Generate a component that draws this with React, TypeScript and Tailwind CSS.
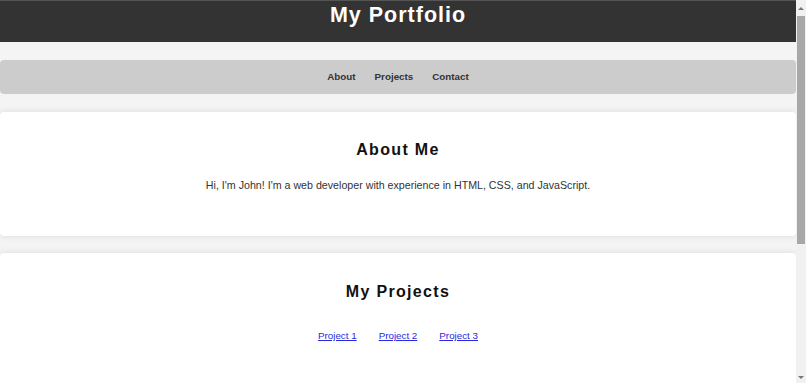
import React from 'react';

const navItems = ['About', 'Projects', 'Contact'];
const projects = ['Project 1', 'Project 2', 'Project 3'];

const Scrollbar: React.FC = () => (
  <div className="w-[10px] shrink-0 bg-[#f1f1f1] flex flex-col items-center">
    <div className="h-[16px] flex items-center justify-center">
      <div className="w-0 h-0 border-l-[3px] border-r-[3px] border-b-[3px] border-l-transparent border-r-transparent border-b-[#777]" />
    </div>
    <div className="w-[8px] h-[228px] bg-[#a8a8a8]" />
    <div className="flex-1" />
    <div className="h-[12px] flex items-center justify-center">
      <div className="w-0 h-0 border-l-[3px] border-r-[3px] border-t-[3px] border-l-transparent border-r-transparent border-t-[#777]" />
    </div>
  </div>
);

export default function App() {
  return (
    <div className="flex h-screen overflow-hidden bg-[#f4f4f4] font-['Liberation_Sans',Arial,sans-serif]">
      <div className="flex-1 min-w-0">
        {/* Header */}
        <header className="h-[42px] bg-[#333] border-t border-[#555] text-center text-white">
          <h1 className="pt-[2px] text-[21.5px] leading-[24px] font-bold tracking-[1px]">My Portfolio</h1>
        </header>

        {/* Nav */}
        <nav className="mt-[18px] h-[34px] bg-[#ccc] rounded-[4px] flex items-center justify-center gap-[19px]">
          {navItems.map((item) => (
            <a key={item} className="text-[9.8px] font-bold text-[#333]">
              {item}
            </a>
          ))}
        </nav>

        {/* About */}
        <section className="mt-[18px] h-[124px] bg-white rounded-[4px] shadow-[0_0_7px_rgba(0,0,0,0.1)] flex flex-col items-center pt-[29px]">
          <h2 className="text-[16px] leading-[18px] font-bold tracking-[1.33px] text-[#111]">About Me</h2>
          <p className="mt-[20px] text-[10.67px] leading-[12px] text-[#333]">
            Hi, I'm John! I'm a web developer with experience in HTML, CSS, and JavaScript.
          </p>
        </section>

        {/* Projects */}
        <section className="mt-[17px] h-[160px] bg-white rounded-[4px] shadow-[0_0_7px_rgba(0,0,0,0.1)] flex flex-col items-center pt-[30px]">
          <h2 className="text-[16px] leading-[18px] font-bold tracking-[1.33px] text-[#111]">My Projects</h2>
          <div className="mt-[29px] flex gap-[22px]">
            {projects.map((p) => (
              <a key={p} href="#" className="text-[9.8px] leading-[11px] text-[#2a2ae0] underline">
                {p}
              </a>
            ))}
          </div>
        </section>
      </div>
      <Scrollbar />
    </div>
  );
}
